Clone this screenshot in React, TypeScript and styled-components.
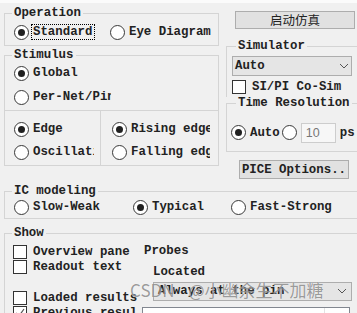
import React from "react";
import styled, { createGlobalStyle } from "styled-components";

const GlobalStyle = createGlobalStyle`
  html, body {
    margin: 0;
    padding: 0;
    overflow: hidden;
    background: #f0f0f0;
  }
  body {
    font-family: "Liberation Mono", "Courier New", monospace;
    font-size: 12.4px;
    font-weight: bold;
    color: #222;
  }
  * { box-sizing: border-box; }
`;

const Page = styled.div`
  position: relative;
  width: 366px;
  height: 313px;
  padding-left: 4px;
  background: linear-gradient(#fbfbfb 0 3px, #f0f0f0 3px);
`;

const Upper = styled.div`
  display: flex;
  align-items: flex-start;
`;

const LeftCol = styled.div`
  width: 215px;
  display: flex;
  flex-direction: column;
`;

const RightCol = styled.div`
  width: 140px;
  margin-left: 7px;
  display: flex;
  flex-direction: column;
`;

// group box
const Group = styled.fieldset<{ $top?: number; $open?: boolean }>`
  margin: ${p => p.$top ?? 0}px 0 0;
  padding: 0;
  min-width: 0;
  border: 1px solid #d4d4d4;
  ${p => (p.$open ? "border-bottom: none;" : "")}
`;

const Title = styled.legend<{ $indent?: number }>`
  margin-left: ${p => p.$indent ?? 7}px;
  padding: 0 2px;
  height: 13px;
  line-height: 13px;
`;

const OperationBody = styled.div`
  padding: 4px 0 5px 9px;
`;

const StimulusBody = styled.div`
  padding: 3px 0 0 9px;
  display: flex;
  flex-direction: column;
  gap: 8px;
`;

const Split = styled.div`
  display: flex;
  margin-top: 5px;
  border-top: 1px solid #d4d4d4;
`;

const Pane = styled.div<{ $w?: number; $pad: number }>`
  ${p => (p.$w ? `width: ${p.$w}px;` : "flex: 1;")}
  padding: 10px 0 5px ${p => p.$pad}px;
  display: flex;
  flex-direction: column;
  gap: 7px;
  & + & {
    border-left: 1px solid #d4d4d4;
  }
`;

const Row = styled.div<{ $cols?: string }>`
  display: grid;
  grid-template-columns: ${p => p.$cols ?? "auto"};
  justify-content: start;
  align-items: center;
  height: 16px;
`;

const Option = styled.label`
  display: flex;
  align-items: center;
  gap: 2px;
  white-space: nowrap;
  min-width: 0;
`;

const Circle = styled.span<{ $on?: boolean }>`
  flex: none;
  width: 15px;
  height: 15px;
  border-radius: 50%;
  border: 1px solid #383838;
  background: #fff;
  display: flex;
  align-items: center;
  justify-content: center;
  &::after {
    content: "";
    width: 7px;
    height: 7px;
    border-radius: 50%;
    background: ${p => (p.$on ? "#202020" : "transparent")};
  }
`;

const Caption = styled.span<{ $focus?: boolean; $clip?: number }>`
  border: 1px ${p => (p.$focus ? "dotted #000" : "solid transparent")};
  padding: 0 1px;
  line-height: 14px;
  overflow: hidden;
  ${p => (p.$clip ? `max-width: ${p.$clip + 4}px;` : "")}
`;

const PushButton = styled.button<{ $w: number; $h: number; $left: number; $top: number }>`
  width: ${p => p.$w}px;
  height: ${p => p.$h}px;
  margin: ${p => p.$top}px 0 0 ${p => p.$left}px;
  padding: 0;
  border: 1px solid #adadad;
  background: #e1e1e1;
  color: #222;
  font: inherit;
  white-space: nowrap;
  overflow: hidden;
`;

const CjkText = styled.span`
  font-family: "Noto Sans CJK SC", sans-serif;
  font-weight: normal;
  font-size: 12.5px;
  line-height: 16px;
`;

const SimBody = styled.div`
  padding: 3px 0 3px 5px;
  display: flex;
  flex-direction: column;
  gap: 3px;
`;

const Dropdown = styled.div<{ $w: number; $h: number; $pl: number; $pr: number }>`
  display: flex;
  align-items: center;
  justify-content: space-between;
  width: ${p => p.$w}px;
  height: ${p => p.$h}px;
  padding: 0 ${p => p.$pr}px 0 ${p => p.$pl}px;
  border: 1px solid #adadad;
  background: #e5e5e5;
  white-space: nowrap;
  overflow: hidden;
`;

const TimeBody = styled.div`
  padding: 8px 0 4px 4px;
  display: flex;
  align-items: center;
  height: 41px;
`;

const NumberField = styled.div`
  width: 35px;
  height: 20px;
  margin-left: 4px;
  padding-left: 4px;
  border: 1px solid #cdcdcd;
  background: #f7f7f7;
  color: #777;
  font-family: "Liberation Sans", Arial, sans-serif;
  font-weight: normal;
  font-size: 12.5px;
  line-height: 18px;
`;

const Unit = styled.span`
  margin-left: 4px;
`;

const IcBody = styled.div`
  padding: 1px 0 3px 9px;
`;

const ShowBody = styled.div`
  display: flex;
  padding: 4px 0 0 8px;
  height: 100px;
`;

const CheckList = styled.div`
  width: 129px;
  display: flex;
  flex-direction: column;
`;

const CheckRow = styled.label<{ $gapTop?: number }>`
  display: flex;
  align-items: center;
  gap: 6px;
  height: 15px;
  margin-top: ${p => p.$gapTop ?? 0}px;
  white-space: nowrap;
`;

const Box = styled.span`
  flex: none;
  width: 14px;
  height: 14px;
  border: 1px solid #333;
  background: #fff;
  display: flex;
  align-items: center;
  justify-content: center;
`;

const CheckText = styled.span`
  max-width: 104px;
  overflow: hidden;
  line-height: 14px;
`;

const ProbePane = styled.div`
  flex: 1;
  display: flex;
  flex-direction: column;
`;

const PaneLabel = styled.div<{ $left: number; $top?: number }>`
  margin: ${p => p.$top ?? 0}px 0 0 ${p => p.$left}px;
  line-height: 15px;
`;

const ListBox = styled.div`
  display: grid;
  grid-template-columns: 1fr 24px;
  width: 208px;
  height: 40px;
  margin-top: 6px;
  border: 1px solid #828790;
  background: #fff;
  & > div:first-child {
    border-right: 1px solid #e3e3e3;
  }
`;

const Watermark = styled.div`
  position: absolute;
  left: 130px;
  top: 279px;
  display: flex;
  align-items: baseline;
  gap: 14px;
  font-family: "Noto Sans CJK SC", sans-serif;
  font-weight: normal;
  font-size: 17px;
  line-height: 22px;
  color: rgba(72, 72, 72, 0.55);
  text-shadow: 0 0 1px rgba(255, 255, 255, 0.9);
  pointer-events: none;
`;

const Chevron = () => (
  <svg width="10" height="6" viewBox="0 0 10 6">
    <polyline points="1,1 5,5 9,1" fill="none" stroke="#555" strokeWidth="1" />
  </svg>
);

const Tick = () => (
  <svg width="12" height="12" viewBox="0 0 12 12">
    <polyline points="2,6 5,9 10,2" fill="none" stroke="#555" strokeWidth="1.2" />
  </svg>
);

interface RadioProps {
  on?: boolean;
  label?: string;
  focus?: boolean;
  clip?: number;
}

const Radio = ({ on, label, focus, clip }: RadioProps) => (
  <Option>
    <Circle $on={on} />
    {label !== undefined && (
      <Caption $focus={focus} $clip={clip}>
        {label}
      </Caption>
    )}
  </Option>
);

const Check = ({ label, on, gapTop }: { label: string; on?: boolean; gapTop?: number }) => (
  <CheckRow $gapTop={gapTop}>
    <Box>{on && <Tick />}</Box>
    <CheckText>{label}</CheckText>
  </CheckRow>
);

export default function App() {
  return (
    <Page>
      <GlobalStyle />
      <Upper>
        <LeftCol>
          <Group $top={7}>
            <Title>Operation</Title>
            <OperationBody>
              <Row $cols="96px auto">
                <Radio on focus label="Standard" />
                <Radio label="Eye Diagram" />
              </Row>
            </OperationBody>
          </Group>
          <Group $top={3}>
            <Title>Stimulus</Title>
            <StimulusBody>
              <Row>
                <Radio on label="Global" />
              </Row>
              <Row>
                <Radio label="Per-Net/Pin" clip={77} />
              </Row>
            </StimulusBody>
            <Split>
              <Pane $w={95} $pad={9}>
                <Row>
                  <Radio on label="Edge" />
                </Row>
                <Row>
                  <Radio label="Oscillation" clip={60} />
                </Row>
              </Pane>
              <Pane $pad={11}>
                <Row>
                  <Radio on label="Rising edge" clip={78} />
                </Row>
                <Row>
                  <Radio label="Falling edge" clip={78} />
                </Row>
              </Pane>
            </Split>
          </Group>
        </LeftCol>
        <RightCol>
          <PushButton $w={120} $h={18} $left={9} $top={11}>
            <CjkText>启动仿真</CjkText>
          </PushButton>
          <Group $top={11} $open>
            <Title $indent={9}>Simulator</Title>
            <SimBody>
              <Dropdown $w={120} $h={20} $pl={2} $pr={2}>
                <span>Auto</span>
                <Chevron />
              </Dropdown>
              <CheckRow>
                <Box />
                <span>SI/PI Co-Sim</span>
              </CheckRow>
            </SimBody>
          </Group>
          <Group>
            <Title $indent={9}>Time Resolution</Title>
            <TimeBody>
              <Radio on label="Auto" />
              <Radio />
              <NumberField>10</NumberField>
              <Unit>ps</Unit>
            </TimeBody>
          </Group>
          <PushButton $w={110} $h={19} $left={13} $top={8}>
            PICE Options..
          </PushButton>
        </RightCol>
      </Upper>
      <Group $top={6}>
        <Title>IC modeling</Title>
        <IcBody>
          <Row $cols="119px 98px auto">
            <Radio label="Slow-Weak" />
            <Radio on label="Typical" />
            <Radio label="Fast-Strong" />
          </Row>
        </IcBody>
      </Group>
      <Group $top={8}>
        <Title>Show</Title>
        <ShowBody>
          <CheckList>
            <Check label="Overview pane" />
            <Check label="Readout text" />
            <Check label="Loaded results" gapTop={16} />
            <Check label="Previous results" on />
            <Check label="" />
          </CheckList>
          <ProbePane>
            <PaneLabel $left={2}>Probes</PaneLabel>
            <PaneLabel $left={11} $top={6}>
              Located
            </PaneLabel>
            <Dropdown $w={199} $h={22} $pl={4} $pr={4} style={{ marginLeft: 11, marginTop: 2 }}>
              <span>Always at the pin</span>
              <Chevron />
            </Dropdown>
            <ListBox>
              <div />
              <div />
            </ListBox>
          </ProbePane>
        </ShowBody>
      </Group>
      <Watermark>
        <span>CSDN</span>
        <span>@小幽余生不加糖</span>
      </Watermark>
    </Page>
  );
}
